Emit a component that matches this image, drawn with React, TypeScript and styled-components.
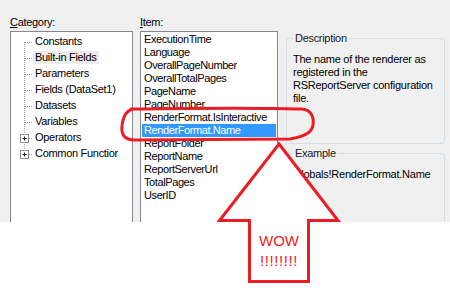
import React from "react";
import styled, { createGlobalStyle } from "styled-components";

const GlobalStyle = createGlobalStyle`
  html, body { margin: 0; padding: 0; background: #ffffff; }
  body { font-family: "Liberation Sans", Arial, sans-serif; color: #000; }
`;

const Page = styled.div`
  position: relative;
  width: 450px;
  height: 291px;
  overflow: hidden;
  background: #ffffff;
`;

const Dialog = styled.div`
  box-sizing: border-box;
  height: 222px;
  background: #f0f0f0;
  display: flex;
  align-items: flex-start;
  padding: 15px 0 0 10px;
  overflow: hidden;
`;

const Column = styled.div<{ $w: number; $gap: number }>`
  display: flex;
  flex-direction: column;
  width: ${(p) => p.$w}px;
  margin-right: ${(p) => p.$gap}px;
  flex: none;
`;

const Label = styled.div`
  height: 16px;
  font-size: 11px;
  line-height: 14px;
  letter-spacing: -0.3px;
  color: #000;
  u { text-decoration: underline; text-underline-offset: 1px; }
`;

const ListBox = styled.div`
  box-sizing: border-box;
  height: 260px;
  background: #fff;
  border: 1px solid #828790;
`;

const TreeBody = styled(ListBox)`
  padding-top: 2px;
`;

const TreeRow = styled.div`
  display: flex;
  align-items: center;
  height: 16px;
`;

const TreeText = styled.span<{ $selected?: boolean }>`
  display: inline-block;
  max-width: 81px;
  overflow: hidden;
  height: 13px;
  line-height: 13px;
  padding: 0 2px;
  margin-top: -1px;
  font-size: 11px;
  letter-spacing: -0.3px;
  white-space: nowrap;
  background: ${(p) => (p.$selected ? "#ececec" : "transparent")};
`;

const ItemBody = styled(ListBox)`
  padding: 1px;
`;

const ItemRow = styled.div<{ $selected?: boolean }>`
  height: 13px;
  line-height: 13px;
  padding-left: 2px;
  font-size: 11px;
  letter-spacing: -0.4px;
  white-space: nowrap;
  color: ${(p) => (p.$selected ? "#fff" : "#000")};
  background: ${(p) => (p.$selected ? "#3399ff" : "transparent")};
`;

const GroupColumn = styled.div`
  display: flex;
  flex-direction: column;
  gap: 2px;
  width: 159px;
  margin-top: 16px;
  flex: none;
`;

const Group = styled.fieldset`
  margin: 0;
  padding: 8px 6px 12px 6px;
  border: 1px solid #d5dfe5;
  border-radius: 3px;
  min-width: 0;
`;

const Legend = styled.legend`
  padding: 0 2px;
  font-size: 11px;
  line-height: 14px;
  letter-spacing: -0.3px;
  color: #1a1a1a;
`;

const GroupText = styled.div<{ $h: number }>`
  height: ${(p) => p.$h}px;
  font-size: 11px;
  line-height: 13px;
  letter-spacing: -0.25px;
  color: #000;
`;

const Overlay = styled.svg`
  position: absolute;
  left: 0;
  top: 0;
  pointer-events: none;
`;

const Shout = styled.div`
  position: absolute;
  left: 249px;
  top: 231px;
  width: 60px;
  text-align: center;
  font-family: "Liberation Sans", Arial, sans-serif;
  font-size: 15px;
  line-height: 20px;
  color: #ed1c24;
`;

const Bangs = styled.div`
  letter-spacing: 0.6px;
`;

type TreeItem = { label: string; expandable?: boolean; selected?: boolean };

const treeItems: TreeItem[] = [
  { label: "Constants" },
  { label: "Built-in Fields", selected: true },
  { label: "Parameters" },
  { label: "Fields (DataSet1)" },
  { label: "Datasets" },
  { label: "Variables" },
  { label: "Operators", expandable: true },
  { label: "Common Functions", expandable: true },
];

const items = [
  "ExecutionTime",
  "Language",
  "OverallPageNumber",
  "OverallTotalPages",
  "PageName",
  "PageNumber",
  "RenderFormat.IsInteractive",
  "RenderFormat.Name",
  "ReportFolder",
  "ReportName",
  "ReportServerUrl",
  "TotalPages",
  "UserID",
];

const Connector: React.FC<{ first: boolean; last: boolean; expandable?: boolean }> = ({
  first,
  last,
  expandable,
}) => (
  <svg width="22" height="16" viewBox="0 0 22 16" style={{ flex: "none" }}>
    <line
      x1="13.5"
      y1={first ? 8 : 0}
      x2="13.5"
      y2={last ? 8 : 16}
      stroke="#a0a0a0"
      strokeDasharray="1 1"
    />
    <line x1={expandable ? 18 : 14} y1="8.5" x2="22" y2="8.5" stroke="#a0a0a0" strokeDasharray="1 1" />
    {expandable && (
      <g>
        <rect x="9.5" y="4.5" width="8" height="8" fill="#ffffff" stroke="#919191" />
        <line x1="11.5" y1="8.5" x2="15.5" y2="8.5" stroke="#1a1a1a" />
        <line x1="13.5" y1="6.5" x2="13.5" y2="10.5" stroke="#1a1a1a" />
      </g>
    )}
  </svg>
);

export default function App() {
  return (
    <Page>
      <GlobalStyle />
      <Dialog>
        <Column $w={123} $gap={7}>
          <Label>
            <u>C</u>ategory:
          </Label>
          <TreeBody>
            {treeItems.map((t, i) => (
              <TreeRow key={t.label}>
                <Connector first={i === 0} last={i === treeItems.length - 1} expandable={t.expandable} />
                <TreeText $selected={t.selected}>{t.label}</TreeText>
              </TreeRow>
            ))}
          </TreeBody>
        </Column>
        <Column $w={138} $gap={8}>
          <Label>
            <u>I</u>tem:
          </Label>
          <ItemBody>
            {items.map((it) => (
              <ItemRow key={it} $selected={it === "RenderFormat.Name"}>
                {it}
              </ItemRow>
            ))}
          </ItemBody>
        </Column>
        <GroupColumn>
          <Group>
            <Legend>Description</Legend>
            <GroupText $h={78}>
              The name of the renderer as registered in the RSReportServer configuration file.
            </GroupText>
          </Group>
          <Group>
            <Legend>Example</Legend>
            <GroupText $h={120}>Globals!RenderFormat.Name</GroupText>
          </Group>
        </GroupColumn>
      </Dialog>

      <Overlay width="450" height="291" viewBox="0 0 450 291">
        <path
          d="M 131 109 C 200 108, 270 108, 302 109 C 312 110, 314 118, 313 125 C 312 132, 306 136, 290 139 L 135 140 C 124 140, 121 134, 122 126 C 123 116, 126 110, 134 109"
          fill="none"
          stroke="#ed1c24"
          strokeWidth="3"
          strokeLinecap="round"
          strokeLinejoin="round"
        />
        <polygon
          points="279,144 338,220.5 308.5,220.5 308.5,281.5 249.5,281.5 249.5,220.5 219.5,220.5"
          fill="#ffffff"
          stroke="#ed1c24"
          strokeWidth="3"
          strokeLinejoin="miter"
        />
      </Overlay>
      <Shout>
        <div>WOW</div>
        <Bangs>!!!!!!!!</Bangs>
      </Shout>
    </Page>
  );
}
